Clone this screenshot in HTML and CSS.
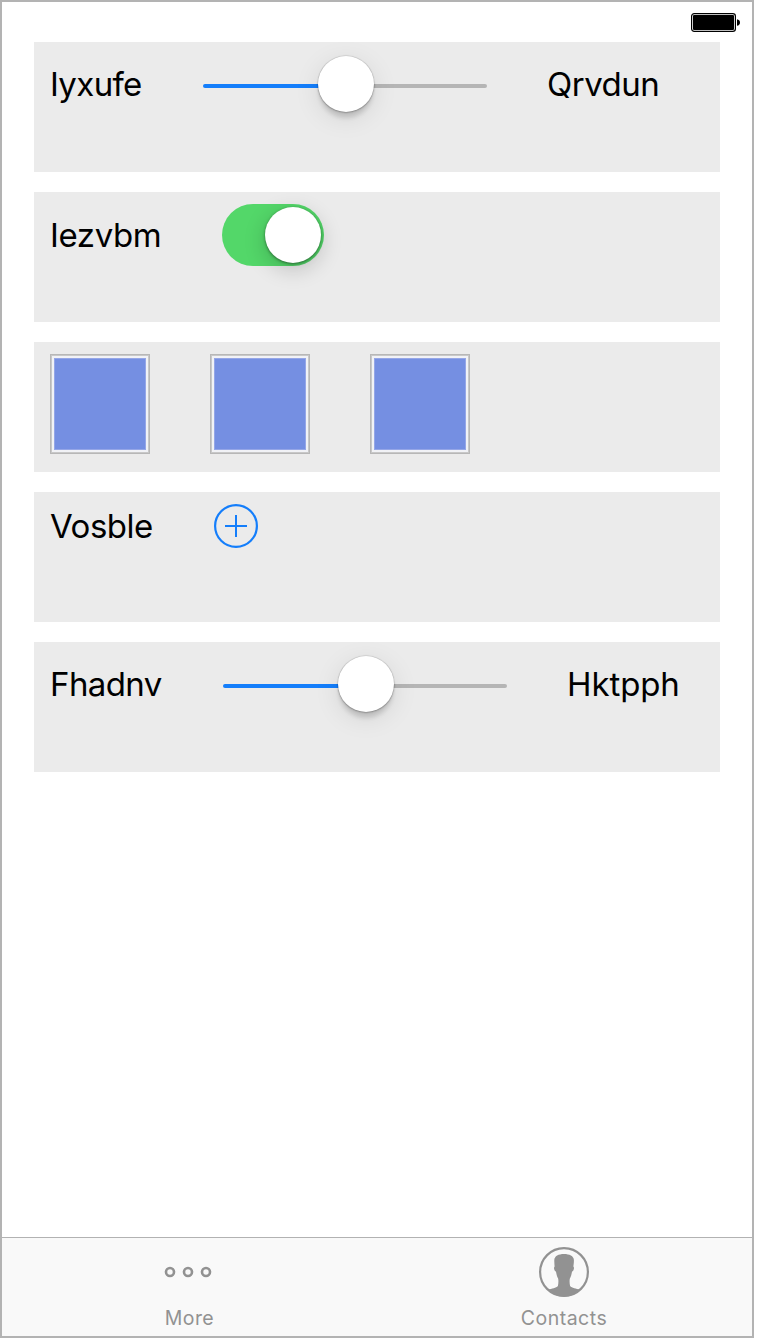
FILE: index.html
```html
<!DOCTYPE html>
<html lang="en">
<head>
<meta charset="utf-8">
<title>Controls</title>
<link rel="stylesheet" href="styles.css">
</head>
<body>
<div class="screen">
  <header class="status-bar">
    <svg class="battery" width="50" height="20" viewBox="0 0 50 20">
      <rect x=".6" y=".6" width="43.8" height="17.8" rx="2.6" fill="#fff" stroke="#000" stroke-width="1.2"/>
      <rect x="2" y="2" width="41" height="15" rx="1" fill="#000"/>
      <path d="M46 6.2c1.8 .3 3 1.500 3 3.300s-1.200 3-3 3.300z" fill="#000"/>
    </svg>
  </header>
  <main class="cards">
    <section class="card">
      <div class="row row-slider">
        <span class="label w-iyxufe">Iyxufe</span>
        <div class="slider"><div class="track"></div><div class="knob"></div></div>
        <span class="label w-qrvdun">Qrvdun</span>
      </div>
    </section>
    <section class="card">
      <div class="row row-switch">
        <span class="label w-iezvbm">Iezvbm</span>
        <div class="switch"><div class="knob"></div></div>
      </div>
    </section>
    <section class="card">
      <div class="row">
        <div class="tile"></div><div class="tile"></div><div class="tile"></div>
      </div>
    </section>
    <section class="card">
      <div class="row row-add">
        <span class="label w-vosble">Vosble</span>
        <svg width="44" height="44" viewBox="0 0 44 44" fill="none" stroke="#147efb" stroke-width="2">
          <circle cx="22" cy="22" r="20.900" stroke-width="2.200"/><path d="M22 11v22M11 22h22"/>
        </svg>
      </div>
    </section>
    <section class="card">
      <div class="row row-slider">
        <span class="label w-fhadnv">Fhadnv</span>
        <div class="slider"><div class="track"></div><div class="knob"></div></div>
        <span class="label w-hktpph">Hktpph</span>
      </div>
    </section>
  </main>
  <nav class="tab-bar">
    <div class="tab">
      <svg class="tab-icon icon-more" width="50" height="50" viewBox="0 0 50 50" fill="none" stroke="#929292" stroke-width="2.6">
        <circle cx="7" cy="25" r="4"/><circle cx="25" cy="25" r="4"/><circle cx="43" cy="25" r="4"/>
      </svg>
      <span class="tab-label">More</span>
    </div>
    <div class="tab">
      <svg class="tab-icon icon-contacts" width="50" height="50" viewBox="0 0 50 50">
        <circle cx="25" cy="25" r="23.900" fill="none" stroke="#929292" stroke-width="2.200"/>
        <path fill="#929292" d="M15.300 13C15.500 9 19.500 7 25 7s9.700 2 9.900 6c.1 2.500-.4 4.800-.5 6.500 1.300 1 .3 4.600-1.400 5.300-.5 3-1.200 5.200-2.200 6.900-.4 2.500-.2 4.800.3 7.300 1.800 2.200 6 2.400 9.900 3.700C36.500 47.500 31 49.500 25 49.500S13.500 47.500 9 42.700c3.900-1.300 8.100-1.500 9.900-3.700.5-2.500.7-4.800.3-7.300-1-1.700-1.700-3.900-2.200-6.900-1.700-.7-2.700-4.300-1.400-5.300-.1-1.700-.4-4-.3-6.500z"/>
      </svg>
      <span class="tab-label label-contacts">Contacts</span>
    </div>
  </nav>
</div>
</body>
</html>
```
FILE: styles.css
```css
*, *::before { box-sizing: border-box; }
body { margin: 0; background: #fff; font-family: Inter, "Liberation Sans", sans-serif; color: #000; }
svg { display: block; flex: none; }
.screen { width: 754px; height: 1338px; border: 2px solid #b3b3b3; display: flex; flex-direction: column; background: #fff; }
.status-bar { height: 40px; display: flex; justify-content: flex-end; padding: 11px 11px 0 0; }
.cards { flex: 1; display: flex; flex-direction: column; gap: 20px; padding: 0 32px; }
.card { height: 130px; padding: 12px 16px; background: #ebebeb; }
.row { display: flex; align-items: center; gap: 60px; }
.row-slider { height: 60px; }
.row-switch { height: 62px; }
.row-add { height: 44px; }
.label { flex: none; font-size: 33px; line-height: 40px; white-space: nowrap; }
.w-iyxufe { width: 93px; letter-spacing: -0.65px; }
.w-qrvdun { width: 113px; letter-spacing: -0.5px; }
.w-iezvbm { width: 112px; letter-spacing: -0.4px; }
.w-vosble { width: 104px; letter-spacing: -0.5px; }
.w-fhadnv { width: 113px; letter-spacing: -0.6px; }
.w-hktpph { width: 113px; letter-spacing: -0.1px; }
.slider { width: 284px; height: 60px; display: grid; place-items: center; flex: none; }
.slider > * { grid-area: 1 / 1; }
.track { width: 284px; height: 4px; margin-top: 4px; border-radius: 2px; background: linear-gradient(90deg, #147efb 50%, #b5b5b5 50%); }
.knob { width: 56px; height: 56px; border-radius: 50%; background: #fff; }
.slider .knob { margin-left: 2px; box-shadow: 0 0 1px 0.5px rgba(0,0,0,.16), 0 1px 2px rgba(0,0,0,.2), 0 7px 4px -1px rgba(0,0,0,.13), 0 6px 26px rgba(0,0,0,.1); }
.switch { width: 102px; height: 62px; padding: 3px; border-radius: 31px; background: #53d769; display: flex; justify-content: flex-end; }
.switch .knob { box-shadow: 0 1px 3px rgba(0,0,0,.45), 0 6px 22px rgba(0,0,0,.2); }
.tile { width: 100px; height: 100px; border: 1px solid #b7b7b7; outline: 1px solid #c8c8c8; outline-offset: -2px; padding: 3px; background: #f1f2f6; }
.tile::before { content: ""; display: block; height: 92px; border: 1px solid #95a6e7; background: #758fe2; }
.tab-bar { height: 99px; border-top: 1px solid #b2b2b2; background: #f9f9f9; display: flex; }
.tab { flex: 1; display: flex; flex-direction: column; align-items: center; padding-top: 9px; color: #929292; }
.icon-more { margin-right: 3px; }
.icon-contacts { margin-right: 1px; }
.tab-label { margin-top: 9px; font-size: 19.500px; line-height: 24px; letter-spacing: 0.4px; }
.label-contacts { letter-spacing: 0.5px; margin-right: 1px; }
```
